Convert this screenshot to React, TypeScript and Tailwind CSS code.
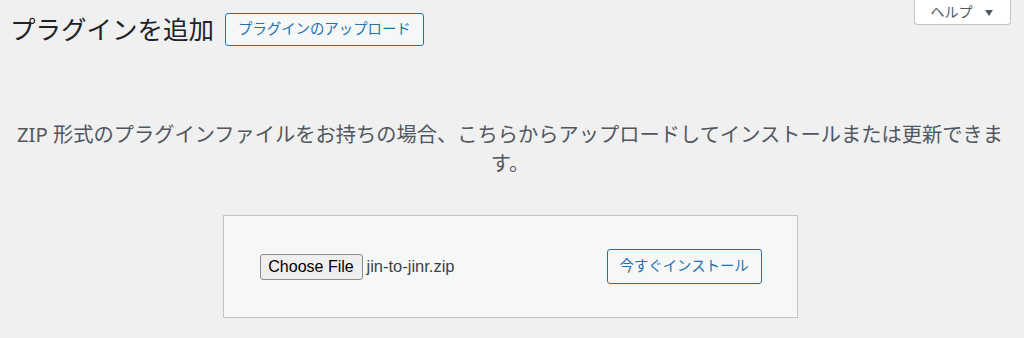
import React from "react";

export default function App() {
  return (
    <div className="relative min-h-[338px] w-full overflow-hidden bg-[#f0f0f1] font-['Noto_Sans','Noto_Sans_CJK_JP',sans-serif]">
      {/* Help tab */}
      <div className="absolute right-[13px] top-0">
        <button className="flex h-[25px] w-[97px] items-center justify-center gap-[12px] rounded-b-[4px] border border-t-0 border-[#c3c4c7] bg-white pr-[2px] text-[14px] leading-none text-[#50575e]">
          <span>ヘルプ</span>
          <svg width="8" height="6" viewBox="0 0 8 6" className="mt-[1px]">
            <polygon points="0,0 8,0 4,6" fill="#50575e" />
          </svg>
        </button>
      </div>

      <div className="pl-[10px] pr-[14px]">
        {/* Title row */}
        <div className="flex items-center pt-[13px]">
          <h1 className="m-0 text-[25.5px] font-normal leading-[33px] text-[#1d2327]">
            プラグインを追加
          </h1>
          <button className="ml-[11px] flex h-[33px] items-center rounded-[3px] border border-[#2271b1] bg-[#f6f7f7] px-[12px] text-[14.4px] leading-none text-[#2271b1]">
            プラグインのアップロード
          </button>
        </div>

        {/* Help text */}
        <p className="m-0 mt-[74px] text-center text-[20.25px] leading-[29px] text-[#50575e]">
          ZIP 形式のプラグインファイルをお持ちの場合、こちらからアップロードしてインストールまたは更新できます。
        </p>

        {/* Upload form */}
        <div className="mx-auto mt-[37px] w-[575px] border border-[#c3c4c7] bg-[#f6f7f7] py-[33px] pl-[36px] pr-[34px]">
          <div className="flex items-center">
            <div className="flex w-[347px] items-center">
              <button className="flex h-[26px] w-[103px] items-center justify-center rounded-[3px] border border-[#8d8d8d] bg-[#efefef] font-['Liberation_Sans',Arial,sans-serif] text-[16px] leading-none text-black">
                Choose File
              </button>
              <span className="ml-[4px] font-['Liberation_Sans',Arial,sans-serif] text-[16.5px] leading-none text-[#3c434a]">
                jin-to-jinr.zip
              </span>
            </div>
            <button className="flex h-[35px] items-center rounded-[3px] border border-[#2271b1] bg-[#f6f7f7] px-[12px] text-[14.4px] leading-none text-[#2271b1]">
              今すぐインストール
            </button>
          </div>
        </div>
      </div>
    </div>
  );
}
